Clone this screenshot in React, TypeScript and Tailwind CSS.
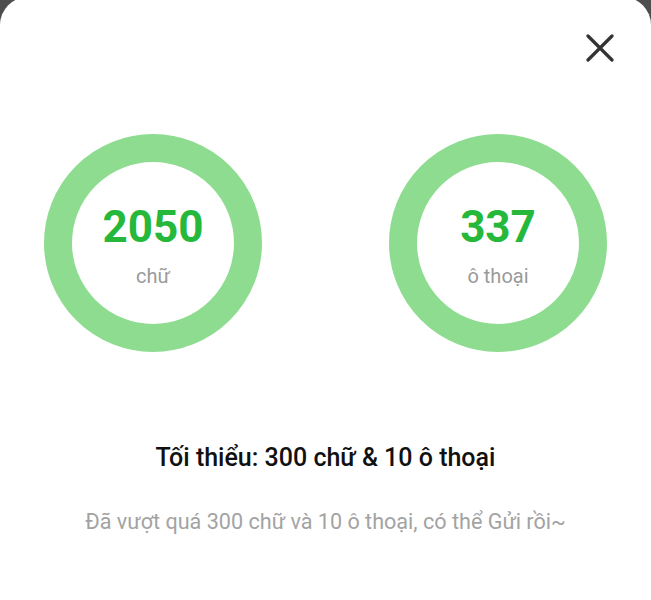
import React from 'react'

const Ring = ({ value, label }: { value: string; label: string }) => (
  <div className="w-[218px] h-[218px] rounded-full border-[28px] border-[#8ddc8f] flex flex-col items-center justify-center pt-[5px]">
    <div className="text-[44px] leading-[44px] font-bold text-[#25b83a]">{value}</div>
    <div className="mt-[17px] text-[20px] leading-[20px] text-[#9a9a9a]">{label}</div>
  </div>
)

export default function App() {
  return (
    <div className="h-[600px] w-full bg-[#4d4d4d] overflow-hidden font-['Roboto',sans-serif]">
      <div className="-mt-[3px] h-[603px] bg-white rounded-t-[28px] flex flex-col">
        {/* Close */}
        <div className="flex justify-end pr-[37px] pt-[37px]">
          <button type="button" className="w-[28px] h-[28px] text-[#333]">
            <svg viewBox="0 0 28 28" width="28" height="28" fill="none" stroke="currentColor" strokeWidth="3.2" strokeLinecap="round">
              <path d="M2 2 L26 26 M26 2 L2 26" />
            </svg>
          </button>
        </div>

        {/* Counters */}
        <div className="mt-[72px] flex justify-between px-[44px]">
          <Ring value="2050" label="chữ" />
          <Ring value="337" label="ô thoại" />
        </div>

        {/* Requirement */}
        <h2 className="mt-[93px] text-center text-[25px] leading-[25px] font-medium text-[#111]">
          Tối thiểu: 300 chữ &amp; 10 ô thoại
        </h2>
        <p className="mt-[41px] text-center text-[21.6px] leading-[21.6px] text-[#a3a3a3]">
          Đã vượt quá 300 chữ và 10 ô thoại, có thể Gửi rồi~
        </p>
      </div>
    </div>
  )
}
